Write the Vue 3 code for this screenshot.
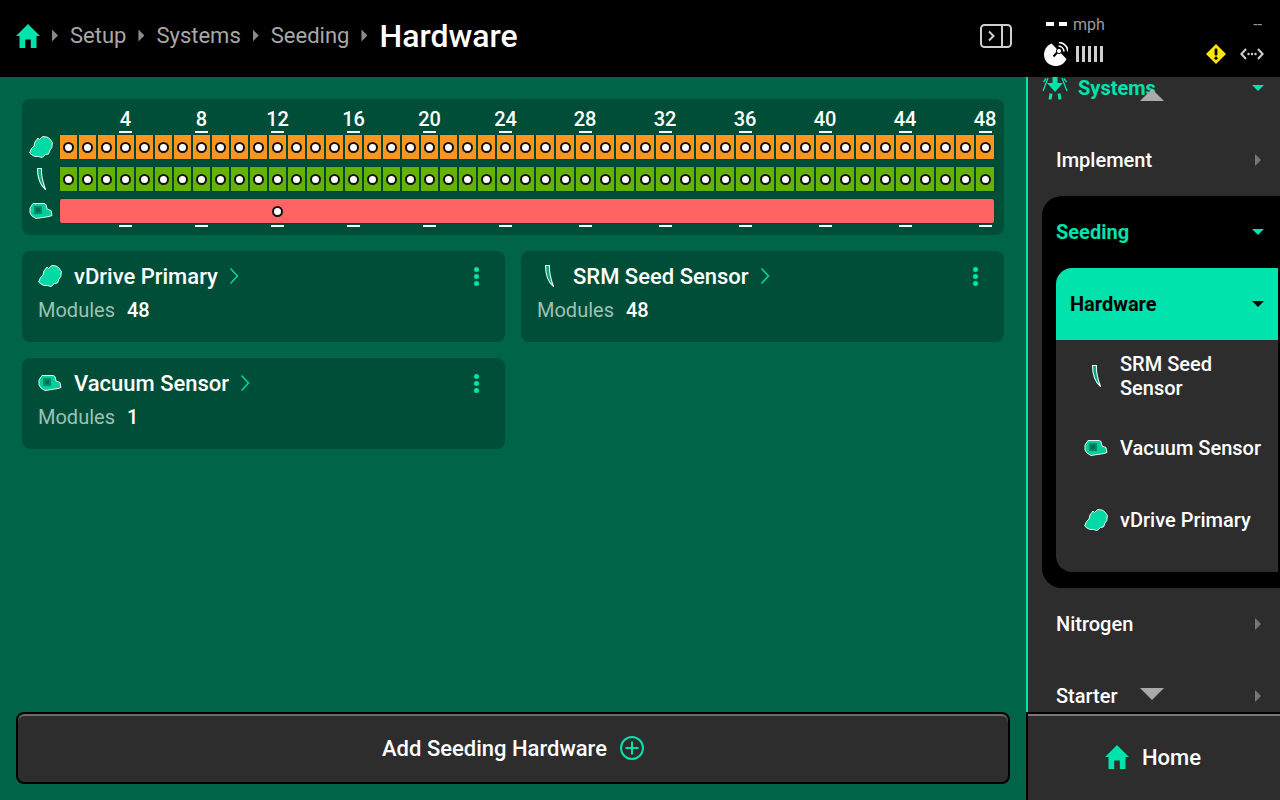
<script setup>
const crumbs = ['Setup', 'Systems', 'Seeding']
const cols = Array.from({ length: 48 }, (_, i) => i + 1)
const cards = [
  { name: 'vDrive Primary', icon: 'vdrive', modules: 48 },
  { name: 'SRM Seed Sensor', icon: 'seed', modules: 48 },
  { name: 'Vacuum Sensor', icon: 'vacuum', modules: 1 }
]
const subs = [
  { name: 'SRM Seed Sensor', icon: 'seed' },
  { name: 'Vacuum Sensor', icon: 'vacuum' },
  { name: 'vDrive Primary', icon: 'vdrive' }
]
</script>

<template>
  <div class="app">
    <svg class="defs" aria-hidden="true">
      <symbol id="home" viewBox="0 0 24 24">
        <path d="M12 0 24 12H20.5V24H14.8V15.5H9.2V24H3.5V12H0Z" fill="#00e3ad" />
      </symbol>
      <symbol id="vdrive" viewBox="0 0 24 24">
        <path d="M.6 18 2.5 13.5 5 11 6 7 9 3 10.5 4.5 12.5 2.5 14 1.5 18 2 20.5 3.5 23.4 7.5 22.8 12.5 21 15 19.5 19 16.5 19.5 13 22.5 9.5 21.5 6 21.5 3 20Z" fill="#00dba6" stroke="#e6f8f3" stroke-width="1" stroke-linejoin="round" />
      </symbol>
      <symbol id="seed" viewBox="0 0 24 24">
        <path d="M8.5 1.5H12.5C12 7 13 13 16.5 22.5 11 18 8.5 10 8.5 1.5Z" fill="#00a67f" stroke="#e6f8f3" stroke-width="1.1" stroke-linejoin="round" />
      </symbol>
      <symbol id="vacuum" viewBox="0 0 24 24">
        <path d="M1 9 4 4.5H15L17 5.5 18 10 22 11.5 23 16.5 20 17.5 7 19.5 3 17 1 14Z" fill="#00cf9c" stroke="#e6f8f3" stroke-width="1" stroke-linejoin="round" />
        <rect x="5" y="7" width="8" height="8" fill="#008a68" />
        <rect x="7" y="9" width="4" height="4" fill="#006f54" />
      </symbol>
    </svg>

    <header class="topbar">
      <nav class="crumbs">
        <svg class="crumb-home"><use href="#home" /></svg>
        <template v-for="c in crumbs" :key="c">
          <i class="crumb-caret"></i>
          <span class="crumb">{{ c }}</span>
        </template>
        <i class="crumb-caret"></i>
        <span class="crumb-now">Hardware</span>
      </nav>
      <svg class="panel-toggle" viewBox="0 0 32 24" fill="none" stroke="#cfcfcf" stroke-width="2">
        <rect x="1" y="1" width="30" height="22" rx="3.5" />
        <path d="M22 1V23" />
        <path d="M9 7.5 13.5 12 9 16.5" />
      </svg>
      <div class="status">
        <div class="status-row">
          <div class="speed"><b class="dash"></b><b class="dash"></b><span class="mph">mph</span></div>
          <span class="dashes">--</span>
        </div>
        <div class="status-row">
          <div class="signal">
            <svg class="dish" viewBox="0 0 24 24">
              <path d="M7.5 1.5C2.5 3.5 0 8.5 0 12.5 0 19 5 24 11.5 24 16.5 24 20.5 21.5 22.5 17Z" fill="#fff" />
              <path d="M9.5 14.5 14.5 9" stroke="#000" stroke-width="2" fill="none" />
              <circle cx="15" cy="9" r="2.6" fill="#fff" stroke="#000" stroke-width="1" />
              <path d="M14.5 4A6 6 0 0 1 20 9.5M15 .5A9.5 9.5 0 0 1 24 9.5" stroke="#fff" stroke-width="1.7" fill="none" />
            </svg>
            <div class="bars"><i></i><i></i><i></i><i></i><i></i></div>
          </div>
          <div class="alerts">
            <svg class="warn" viewBox="0 0 20 20">
              <path d="M10 0 20 10 10 20 0 10Z" fill="#ffe600" />
              <rect x="8.6" y="4.5" width="2.8" height="7" rx="1.2" fill="#000" />
              <circle cx="10" cy="14.2" r="1.6" fill="#000" />
            </svg>
            <svg class="link" viewBox="0 0 24 12" fill="none" stroke="#cfcfcf" stroke-width="2">
              <path d="M6 1 1.4 6 6 11M18 1 22.6 6 18 11" />
              <circle cx="8.5" cy="6" r="1.2" fill="#cfcfcf" stroke="none" />
              <circle cx="12" cy="6" r="1.2" fill="#cfcfcf" stroke="none" />
              <circle cx="15.5" cy="6" r="1.2" fill="#cfcfcf" stroke="none" />
            </svg>
          </div>
        </div>
      </div>
    </header>

    <div class="body">
      <main class="main">
        <div class="content">
          <section class="map">
            <div class="map-line">
              <span class="map-gutter"></span>
              <div class="grid">
                <div v-for="n in cols" :key="n" class="label-cell">
                  <template v-if="n % 4 === 0">
                    <span class="label">{{ n }}</span>
                    <i class="tick"></i>
                  </template>
                </div>
              </div>
            </div>
            <div class="map-line row-line">
              <svg class="map-gutter map-icon"><use href="#vdrive" /></svg>
              <div class="grid track">
                <div v-for="n in cols" :key="n" class="cell orange"><i class="dot"></i></div>
              </div>
            </div>
            <div class="map-line row-line">
              <svg class="map-gutter map-icon"><use href="#seed" /></svg>
              <div class="grid track">
                <div v-for="n in cols" :key="n" class="cell lime"><i class="dot"></i></div>
              </div>
            </div>
            <div class="map-line row-line">
              <svg class="map-gutter map-icon"><use href="#vacuum" /></svg>
              <div class="grid track red-track">
                <div v-for="n in cols" :key="n" class="cell"><i v-if="n === 12" class="dot"></i></div>
              </div>
            </div>
            <div class="map-line under">
              <span class="map-gutter"></span>
              <div class="grid">
                <div v-for="n in cols" :key="n" class="tick-cell">
                  <i v-if="n % 4 === 0" class="tick"></i>
                </div>
              </div>
            </div>
          </section>

          <section class="cards">
            <article v-for="c in cards" :key="c.name" class="card">
              <div class="card-head">
                <svg class="card-icon"><use :href="'#' + c.icon" /></svg>
                <span class="card-title">{{ c.name }}</span>
                <svg class="card-chev" viewBox="0 0 10 18" fill="none" stroke="#00d9a6" stroke-width="1.5"><path d="M1.5 1.5 8.5 9 1.5 16.5" /></svg>
                <div class="kebab"><i></i><i></i><i></i></div>
              </div>
              <div class="card-meta">
                <span class="meta-key">Modules</span>
                <span class="meta-val">{{ c.modules }}</span>
              </div>
            </article>
          </section>
        </div>

        <button class="add">
          <span>Add Seeding Hardware</span>
          <svg class="plus" viewBox="0 0 24 24" fill="none" stroke="#00e3ad" stroke-width="2">
            <circle cx="12" cy="12" r="11" />
            <path d="M12 5.5V18.5M5.5 12H18.5" />
          </svg>
        </button>
      </main>

      <aside class="side">
        <div class="scroller">
          <div class="list">
            <div class="item systems">
              <div class="item-left">
                <svg class="sys-icon" viewBox="0 0 26 24" fill="none" stroke="#00e3ad">
                  <path d="M10.5 0H15.5V7H21L13 16 5 7H10.5Z" fill="#00e3ad" stroke="none" />
                  <path d="M9 17.5 8 23.5M17 17.5 18 23.5" stroke-width="3" />
                  <path d="M1 15 6 2M25 15 20 2M1.5 6 4 2.5M24.5 6 22 2.5" stroke-width="1.3" />
                </svg>
                <span>Systems</span>
              </div>
              <i class="down"></i>
            </div>
            <div class="item plain"><span>Implement</span><i class="right"></i></div>
            <div class="seeding">
              <div class="item seeding-head"><span>Seeding</span><i class="down"></i></div>
              <div class="item hardware"><span>Hardware</span><i class="down dark"></i></div>
              <div class="subs">
                <div v-for="s in subs" :key="s.name" class="sub">
                  <svg class="sub-icon"><use :href="'#' + s.icon" /></svg>
                  <span class="sub-name">{{ s.name }}</span>
                </div>
              </div>
            </div>
            <div class="item plain"><span>Nitrogen</span><i class="right"></i></div>
            <div class="item plain"><span>Starter</span><i class="right"></i></div>
          </div>
          <i class="scroll-up"></i>
          <i class="scroll-down"></i>
        </div>
        <button class="home">
          <svg class="home-icon"><use href="#home" /></svg>
          <span>Home</span>
        </button>
      </aside>
    </div>
  </div>
</template>

<style scoped>
.app {
  width: 1280px;
  height: 800px;
  display: flex;
  flex-direction: column;
  overflow: hidden;
  background: #006548;
  font-family: Roboto, "Liberation Sans", sans-serif;
  color: #fff;
}
.defs { position: absolute; width: 0; height: 0; }
.topbar {
  flex: none;
  height: 77px;
  background: #000;
  display: flex;
  align-items: center;
  padding-left: 16px;
}
.crumbs { display: flex; align-items: center; gap: 12px; flex: 1; margin-bottom: 6px; }
.crumb-home { width: 24px; height: 24px; margin-top: 1px; }
.crumb { font-size: 22px; color: #a8a8a8; line-height: 30px; }
.crumb-now { font-size: 32px; font-weight: 500; line-height: 36px; }
.crumb-caret {
  width: 6px;
  height: 12px;
  background: #8a8a8a;
  clip-path: polygon(0 0, 100% 50%, 0 100%);
}
.panel-toggle { width: 32px; height: 24px; margin: 0 16px 6px 0; }
.status {
  width: 252px;
  height: 77px;
  flex: none;
  display: flex;
  flex-direction: column;
  padding: 13px 16px 0 16px;
  box-sizing: border-box;
}
.status-row { display: flex; justify-content: space-between; align-items: center; }
.status-row + .status-row { margin-top: 7px; }
.speed { display: flex; align-items: center; gap: 5px; height: 22px; margin-left: 2px; }
.dash { width: 8px; height: 3.5px; background: #fff; }
.mph { font-size: 16px; color: #9a9a9a; margin-left: 1px; }
.dashes { font-size: 16px; color: #9a9a9a; margin-right: 2px; }
.signal { display: flex; align-items: center; gap: 8px; }
.dish { width: 24px; height: 24px; }
.bars { display: flex; gap: 3px; }
.bars i { width: 3px; height: 16px; background: #cfcfcf; }
.alerts { display: flex; align-items: center; gap: 14px; }
.warn { width: 20px; height: 20px; }
.link { width: 24px; height: 12px; }

.body { flex: 1; min-height: 0; display: flex; }
.main {
  flex: 1;
  min-width: 0;
  box-sizing: border-box;
  padding: 22px 16px 16px;
  display: flex;
  flex-direction: column;
}
.content { margin: 0 6px; flex: 1; }
.map {
  background: #004e38;
  border-radius: 8px;
  padding: 8px 0;
}
.map-line { display: flex; }
.row-line { margin-top: 8px; align-items: center; }
.row-line:nth-child(2) { margin-top: 2px; }
.under { margin-top: 2px; }
.map-gutter { width: 38px; flex: none; }
.map-icon { height: 24px; }
.grid {
  display: grid;
  grid-template-columns: repeat(24, 19px) repeat(24, 20px);
}
.label-cell {
  height: 26px;
  margin-right: 2px;
  display: flex;
  flex-direction: column;
  align-items: center;
  justify-content: flex-end;
}
.label {
  font-size: 20px;
  font-weight: 500;
  line-height: 24px;
  white-space: nowrap;
}
.tick { width: 13px; height: 2px; background: #fff; flex: none; display: block; }
.tick-cell {
  height: 2px;
  margin-right: 2px;
  display: flex;
  justify-content: center;
}
.track { height: 24px; border-radius: 2px; box-shadow: 0 0 0 1px #014733; background: #014733; }
.cell {
  height: 24px;
  margin-right: 2px;
  display: flex;
  align-items: center;
  justify-content: center;
}
.orange { background: #fa951e; }
.lime { background: #65b200; }
.red-track { background: #ff6363; width: 934px; grid-template-columns: repeat(24, 19px) repeat(23, 20px) 18px; }
.dot {
  width: 11px;
  height: 11px;
  box-sizing: border-box;
  border-radius: 50%;
  background: #fff;
  border: 2.5px solid #111;
  flex: none;
  display: block;
}
.cards {
  margin-top: 16px;
  display: grid;
  grid-template-columns: 483px 483px;
  gap: 16px;
}
.card {
  background: #004e38;
  border-radius: 8px;
  padding: 12px 16px 20px;
  display: flex;
  flex-direction: column;
  gap: 9px;
  height: 91px;
  box-sizing: border-box;
}
.card-head { display: flex; align-items: center; height: 26px; }
.card-icon { width: 24px; height: 24px; flex: none; }
.card-title { font-size: 22px; font-weight: 500; margin-left: 12px; white-space: nowrap; }
.card-chev { width: 10px; height: 18px; margin-left: 11px; flex: none; }
.kebab {
  margin-left: auto;
  margin-right: 10px;
  display: flex;
  flex-direction: column;
  gap: 2px;
}
.kebab i { width: 5px; height: 5px; border-radius: 50%; background: #00e3ad; display: block; }
.card-meta { display: flex; gap: 12px; font-size: 20px; line-height: 24px; }
.meta-key { color: #9fc1b5; }
.meta-val { font-weight: 500; }

.add {
  flex: none;
  height: 72px;
  box-sizing: border-box;
  background: #2d2d2d;
  border: 2px solid #000;
  border-radius: 8px;
  box-shadow: inset 0 2px 0 #6a6a6a;
  display: flex;
  align-items: center;
  justify-content: center;
  gap: 13px;
  color: #fff;
  font: 500 22px Roboto, "Liberation Sans", sans-serif;
  padding: 0;
}
.plus { width: 24px; height: 24px; }

.side { width: 254px; flex: none; display: flex; flex-direction: column; background: #2d2d2d; }
.scroller {
  flex: 1;
  min-height: 0;
  overflow: hidden;
  position: relative;
  border-left: 2px solid #00e3ad;
}
.list { margin-top: -25px; }
.item {
  height: 72px;
  display: flex;
  align-items: center;
  justify-content: space-between;
  box-sizing: border-box;
  padding-right: 16px;
  font-size: 20px;
  font-weight: 500;
}
.plain { padding-left: 28px; }
.systems { padding-left: 14px; color: #00e3ad; }
.item-left { display: flex; align-items: center; gap: 10px; }
.sys-icon { width: 26px; height: 24px; }
.systems span { font-weight: 700; }
.down {
  width: 12px;
  height: 6px;
  background: #00e3ad;
  clip-path: polygon(0 0, 100% 0, 50% 100%);
  display: block;
}
.down.dark { background: #000; }
.right {
  width: 6px;
  height: 12px;
  margin-right: 3px;
  background: #777;
  clip-path: polygon(0 0, 100% 50%, 0 100%);
  display: block;
}
.seeding {
  margin-left: 14px;
  background: #000;
  border-radius: 20px 0 0 20px;
  padding: 0 2px 16px 14px;
}
.seeding-head { color: #00e3ad; padding-right: 14px; font-weight: 700; }
.hardware {
  background: #00e3ad;
  color: #000;
  border-radius: 16px 0 0 0;
  padding-left: 14px;
  padding-right: 14px;
  font-weight: 700;
}
.subs { background: #2d2d2d; border-radius: 0 0 0 16px; padding-bottom: 16px; }
.sub {
  height: 72px;
  display: flex;
  align-items: center;
  gap: 12px;
  padding-left: 28px;
}
.sub-icon { width: 24px; height: 24px; flex: none; }
.sub-name { font-size: 20px; font-weight: 500; line-height: 24px; width: 146px; }
.scroll-up, .scroll-down {
  position: absolute;
  left: 112px;
  width: 24px;
  height: 12px;
  background: #aaa;
  display: block;
}
.scroll-up { top: 12px; clip-path: polygon(50% 0, 100% 100%, 0 100%); }
.scroll-down { bottom: 12px; clip-path: polygon(0 0, 100% 0, 50% 100%); }
.home {
  flex: none;
  height: 88px;
  box-sizing: border-box;
  background: #2d2d2d;
  border: 0;
  border-top: 2px solid #000;
  border-left: 2px solid #000;
  box-shadow: inset 0 2px 0 #777;
  display: flex;
  align-items: center;
  justify-content: center;
  gap: 13px;
  color: #fff;
  font: 500 22px Roboto, "Liberation Sans", sans-serif;
  padding: 0 2px 0 0;
}
.home-icon { width: 24px; height: 24px; }
</style>
